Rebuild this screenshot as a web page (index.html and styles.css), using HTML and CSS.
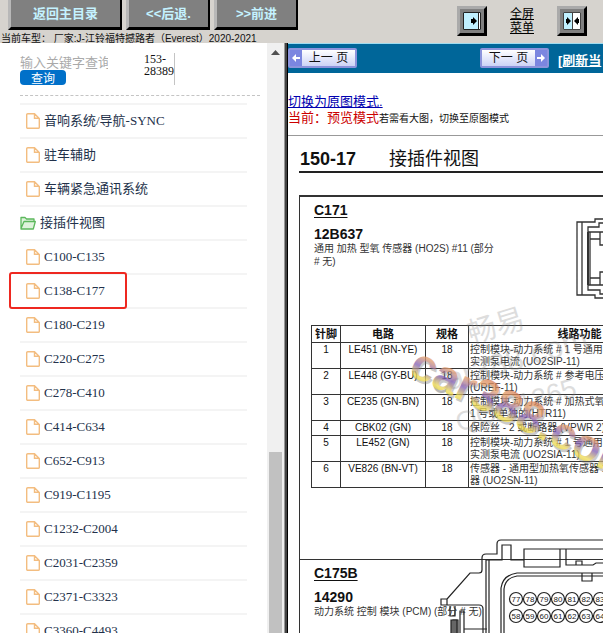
FILE: index.html
```html
<!DOCTYPE html>
<html lang="zh-CN">
<head>
<meta charset="utf-8">
<title>接插件视图</title>
<link rel="stylesheet" href="styles.css">
</head>
<body>
<svg class="defs" aria-hidden="true">
  <symbol id="doc" viewBox="0 0 14 16"><path d="M2 .7h6.5L13.3 5.500v9a1 1 0 0 1-1 .8H1.700a1 1 0 0 1-1-1V1.700a1 1 0 0 1 1-1zM8.500.7v4.500h4.800" fill="none" stroke="#f3bd80" stroke-width="1.400"/></symbol>
</svg>
<header class="top">
  <nav class="top-nav">
    <button class="big wide">返回主目录</button>
    <button class="big">&lt;&lt;后退.</button>
    <button class="big">&gt;&gt;前进</button>
  </nav>
  <div class="tools">
    <button class="tool" aria-label="展开"><svg width="18" height="18" viewBox="0 0 18 18"><path d="M0 0h18v18H0z" fill="#c0f0ff"/><path d="M15 1h2v16h-2z" fill="#fff"/><path d="M.5 17.500V.5h17v17zM15.500 1v16" fill="none" stroke="#222"/><path d="M8 7h2V5l4 4-4 4v-2H8z"/></svg></button>
    <a class="full" href="#">全屏<br>菜单</a>
    <button class="tool" aria-label="收起"><svg width="18" height="18" viewBox="0 0 18 18"><path d="M0 0h18v18H0z" fill="#fff"/><path d="M0 0h9v18H0z" fill="#c0f0ff"/><path d="M.5 17.500V.5h17v17zM9.500 0v18" fill="none" stroke="#444"/><path d="M3 7h1V5l4 4-4 4v-2H3zM16 7h-1V5l-4 4 4 4v-2h1z"/></svg></button>
  </div>
  <p class="car">当前车型： 厂家:J-江铃福特撼路者（Everest）2020-2021</p>
</header>
<div class="main">
  <aside class="side">
    <form class="search">
      <div class="field">
        <input class="query" type="text" placeholder="输入关键字查询" aria-label="输入关键字查询">
        <button class="go" type="button">查询</button>
      </div>
      <div class="num">153-28389</div>
    </form>
    <ul class="tree">
      <li><a href="#"><svg><use href="#doc"/></svg>音响系统/导航-SYNC</a></li>
      <li><a href="#"><svg><use href="#doc"/></svg>驻车辅助</a></li>
      <li><a href="#"><svg><use href="#doc"/></svg>车辆紧急通讯系统</a></li>
      <li class="folder"><a href="#"><svg viewBox="0 0 16 14"><path d="M1 12.500V1.500h4l1.500 1.500H14v2.500M1 12.500l3-7h11.300l-2 7.500H1z" fill="#dff3dc" stroke="#5cb85c" stroke-width="1.300" stroke-linejoin="round"/></svg>接插件视图</a></li>
      <li><a href="#"><svg><use href="#doc"/></svg>C100-C135</a></li>
      <li class="marked"><a href="#"><svg><use href="#doc"/></svg>C138-C177</a></li>
      <li><a href="#"><svg><use href="#doc"/></svg>C180-C219</a></li>
      <li><a href="#"><svg><use href="#doc"/></svg>C220-C275</a></li>
      <li><a href="#"><svg><use href="#doc"/></svg>C278-C410</a></li>
      <li><a href="#"><svg><use href="#doc"/></svg>C414-C634</a></li>
      <li><a href="#"><svg><use href="#doc"/></svg>C652-C913</a></li>
      <li><a href="#"><svg><use href="#doc"/></svg>C919-C1195</a></li>
      <li><a href="#"><svg><use href="#doc"/></svg>C1232-C2004</a></li>
      <li><a href="#"><svg><use href="#doc"/></svg>C2031-C2359</a></li>
      <li><a href="#"><svg><use href="#doc"/></svg>C2371-C3323</a></li>
      <li><a href="#"><svg><use href="#doc"/></svg>C3360-C4493</a></li>
    </ul>
  </aside>
  <div class="scroll"><svg width="9" height="5" viewBox="0 0 9 5"><path d="M4.500 0L9 5H0z" fill="#505050"/></svg><div class="thumb"></div></div>
  <div class="split"></div>
  <main class="view">
    <nav class="pager">
      <a class="page" href="#"><svg viewBox="0 0 12 16"><path d="M0 0h12v16H0z" fill="#7b86e0"/><path d="M2 8l4-4v3h4v2H6v3z" fill="#fff"/></svg><span>上一 页</span></a>
      <a class="page" href="#"><span>下一 页</span><svg viewBox="0 0 12 16"><path d="M0 0h12v16H0z" fill="#7b86e0"/><path d="M10 8L6 4v3H2v2h4v3z" fill="#fff"/></svg></a>
      <a class="refresh" href="#">[刷新当</a>
    </nav>
    <div class="mode">
      <a href="#">切换为原图模式.</a>
      <p><span class="red">当前：预览模式</span>若需看大图，切换至原图模式</p>
    </div>
    <article class="sheet">
      <h1><b>150-17</b>接插件视图</h1>
      <div class="frame">
        <section class="part first">
          <h2>C171</h2>
          <h3>12B637</h3>
          <p>通用 加热 型氧 传感器 (HO2S) #11 (部分<br># 无)</p>
          <svg class="plug" width="120" height="82" viewBox="0 0 120 82" fill="none" stroke="#333" stroke-width="1.300"><path d="M120 1H19v3H1v73h18v3h101M6 4v73M120 5H23v4H12v63h12v4h96M14 14v53M12 14h108M12 67h108M14 21h10v-7M14 60h10v7M24 21v6h96M24 60v-6h96"/><path d="M12 14v53" stroke-width="2"/></svg>
          <table>
            <thead><tr><th class="c1">针脚</th><th class="c2">电路</th><th class="c3">规格</th><th>线路功能</th></tr></thead>
            <tbody>
              <tr><td>1</td><td>LE451 (BN-YE)</td><td>18</td><td>控制模块-动力系统 # 1 号通用<br>实测泵电流 (UO2SIP-11)</td></tr>
              <tr><td>2</td><td>LE448 (GY-BU)</td><td>18</td><td>控制模块-动力系统 # 参考电压<br>(UREF-11)</td></tr>
              <tr><td>3</td><td>CE235 (GN-BN)</td><td>18</td><td>控制模块-动力系统 # 加热式氧<br>1 号或单独的(HTR11)</td></tr>
              <tr><td>4</td><td>CBK02 (GN)</td><td>18</td><td>保险丝 - 2 或断路器 (VPWR 2)</td></tr>
              <tr><td>5</td><td>LE452 (GN)</td><td>18</td><td>控制模块-动力系统 # 1 号通用<br>实测泵电流 (UO2SIA-11)</td></tr>
              <tr><td>6</td><td>VE826 (BN-VT)</td><td>18</td><td>传感器 - 通用型加热氧传感器 1<br>器 (UO2SN-11)</td></tr>
            </tbody>
          </table>
          <svg class="mark" width="220" height="200" viewBox="0 0 220 200">
            <defs><linearGradient id="g" x1="0" y1="0" x2="0" y2="1"><stop offset="0" stop-color="#c85a3c"/><stop offset=".35" stop-color="#e5a06a"/><stop offset=".55" stop-color="#7d5ab4"/><stop offset=".75" stop-color="#f0dc50"/><stop offset="1" stop-color="#b9a02d"/></linearGradient></defs>
            <g class="ghost"><text x="66" y="47" transform="rotate(-17 66 47)" font-size="29">畅易</text><text x="30" y="98" transform="rotate(-17 30 98)" font-size="31">car388.com</text><text x="54" y="135" transform="rotate(-17 54 135)" font-size="27">QQ 21365</text></g>
            <g class="brand" transform="rotate(26 2 77)"><text x="4" y="79" fill="#777" opacity=".5">car388.com</text><text x="2" y="77" fill="url(#g)">car388.com</text></g>
          </svg>
        </section>
        <section class="part second">
          <h2>C175B</h2>
          <h3>14290</h3>
          <p>动力系统 控制 模块 (PCM) (部分 # 无)</p>
          <svg class="pcm" width="164" height="94" viewBox="0 0 164 94" fill="none" stroke="#222" stroke-width="1.200">
            <path d="M164 1H62q-4 0-4 4v10H47q-4 0-4 4v12q0 3-3 3h-9L8 60v6h32q4 0 4 4v24M2 60h6v6H2zM11 67v10h5V67M50 94V21h13V6h9v15h13M47 94V21h3M85 10h36v18H85zM121 10h43M127 10v16h27l3-2h7M137 26v-4h6v4M62 94V49q2-13 16-15h86M65 94V50q1-11 13-13h86M143 34v8h10v-8M14 94V81h5v13M21 94V72h4v22M25 90h23"/>
            <path d="M12 94V81h6v13" fill="#666"/>
            <g class="pins"><circle cx="77" cy="60" r="6.500"/><circle cx="91" cy="60" r="6.500"/><circle cx="105" cy="60" r="6.500"/><circle cx="119" cy="60" r="6.500"/><circle cx="133" cy="60" r="6.500"/><circle cx="147" cy="60" r="6.500"/><circle cx="161" cy="60" r="6.500"/><circle cx="77" cy="77" r="6.500"/><circle cx="91" cy="77" r="6.500"/><circle cx="105" cy="77" r="6.500"/><circle cx="119" cy="77" r="6.500"/><circle cx="133" cy="77" r="6.500"/><circle cx="147" cy="77" r="6.500"/><circle cx="161" cy="77" r="6.500"/>
            <text x="77" y="63">77</text><text x="91" y="63">78</text><text x="105" y="63">79</text><text x="119" y="63">80</text><text x="133" y="63">81</text><text x="147" y="63">82</text><text x="161" y="63">83</text><text x="77" y="80">58</text><text x="91" y="80">59</text><text x="105" y="80">60</text><text x="119" y="80">61</text><text x="133" y="80">62</text><text x="147" y="80">63</text><text x="161" y="80">64</text></g>
          </svg>
        </section>
      </div>
    </article>
  </main>
</div>
</body>
</html>
```
FILE: styles.css
```css
*, *::after { box-sizing: border-box; }
body {
  margin: 0;
  height: 100vh;
  overflow: hidden;
  display: grid;
  grid-template-rows: 43px minmax(0, 1fr);
  background: #fff;
  font-family: "Liberation Sans", "Noto Sans CJK SC", sans-serif;
  color: #111;
}
h1, h2, h3, p, ul { margin: 0; padding: 0; }
.defs { position: absolute; width: 0; height: 0; }

.top {
  display: grid;
  grid-template-columns: auto 1fr;
  grid-template-rows: 31px 12px;
  background: #d6d3ce;
  overflow: hidden;
}
.top-nav { display: flex; gap: 4px; padding-left: 8px; height: 30px; }
.big {
  width: 84px;
  height: 30px;
  padding: 0 0 2px;
  border: solid #000;
  border-width: 0 2px 3px 3px;
  border-left-color: #b8b8b8;
  background: #808080;
  color: #c4f2ff;
  font: bold 13px "Liberation Sans", "Noto Sans CJK SC", sans-serif;
  white-space: nowrap;
}
.wide { width: 114px; }
.tools { display: flex; justify-content: flex-end; align-items: flex-start; gap: 19px; padding: 6px 16px 0 0; }
.tool {
  width: 30px;
  height: 30px;
  padding: 3px;
  border: 3px solid;
  border-color: #aaa #000 #000 #aaa;
  background: #808080;
}
.tool svg { display: block; }
.full { width: 32px; text-align: center; font-size: 12px; line-height: 14px; color: #000; padding-top: 1px; }
.car { grid-column: 1 / 3; padding-left: 1px; font-size: 10px; line-height: 16px; white-space: nowrap; }

.main { display: grid; grid-template-columns: 267px 17px 4px minmax(0, 1fr); min-height: 0; }
.side { padding: 10px 7px 0 20px; overflow: hidden; }
.search { display: flex; height: 43px; border-bottom: 1px dashed #c4c4c4; }
.field { width: 124px; display: flex; flex-direction: column; align-items: flex-start; }
.query {
  width: 88px;
  height: 17px;
  padding: 0;
  border: 0;
  outline: 0;
  background: none;
  font: 13px "Noto Sans CJK SC", sans-serif;
}
.query::placeholder { color: #aaa; }
.go {
  width: 46px;
  height: 15px;
  padding: 0;
  border: 0;
  border-radius: 4px;
  background: #0070c9;
  color: #fff;
  font: 12px/15px "Noto Sans CJK SC", sans-serif;
}
.num {
  width: 31px;
  height: 32px;
  border-right: 1px solid #c4c4c4;
  font: 12px/12px "Liberation Serif", serif;
  overflow-wrap: break-word;
}
.tree { list-style: none; margin: 7px 13px 0 0; border-top: 2px solid #f4f4f4; }
.tree li { position: relative; height: 34px; border-bottom: 2px solid #f4f4f4; padding-left: 6px; }
.tree a {
  display: flex;
  align-items: center;
  gap: 4px;
  height: 32px;
  color: #22314a;
  font: 13px/16px "Liberation Serif", "Noto Sans CJK SC", serif;
  text-decoration: none;
  white-space: nowrap;
}
.tree svg { width: 14px; height: 16px; }
.tree .folder { padding-left: 0; }
.tree .folder svg { width: 16px; height: 14px; }
.marked::after {
  content: "";
  position: absolute;
  left: -11px;
  top: -3px;
  width: 118px;
  height: 37px;
  border: 2px solid #ee2820;
  border-radius: 3px;
}
.scroll { display: flex; flex-direction: column; align-items: center; justify-content: space-between; padding-top: 7px; background: #f0f0f0; }
.thumb { width: 13px; height: 31%; background: #c1c1c1; }
.split { background: #444; border-left: 1px solid #999; border-right: 1px solid #000; }

.view { overflow: hidden; }
.pager {
  display: flex;
  height: 30px;
  align-items: flex-start;
  padding-top: 4px;
  background: #069;
  border-top: 1px solid #9edcf0;
}
.page {
  display: flex;
  align-items: stretch;
  width: 69px;
  height: 20px;
  border: 2px solid #8c93dc;
  border-radius: 2px;
  background: linear-gradient(#fff, #ccd3f6);
  color: #111;
  font-size: 12px;
  line-height: 16px;
  text-decoration: none;
}
.page span { flex: 1; text-align: center; white-space: nowrap; }
.page svg { width: 12px; height: 16px; }
.page + .page { margin-left: 123px; }
.refresh { margin-left: 9px; color: #fff; font-weight: bold; font-size: 13px; line-height: 26px; white-space: nowrap; }
.mode { padding: 21px 0 0; height: 63px; border-bottom: 1px solid #999; font-size: 13px; line-height: 16px; white-space: nowrap; }
.mode a { display: block; color: #0000b0; }
.mode p { font-size: 10px; line-height: 16px; }
.red { color: #c00; font-size: 13px; }

.sheet { padding-left: 11px; }
.sheet h1 {
  display: flex;
  gap: 33px;
  height: 37px;
  padding: 12px 0 0 1px;
  border-bottom: 2px solid #222;
  font-size: 18px;
  font-weight: normal;
  line-height: 22px;
  white-space: nowrap;
}
.frame { margin-top: 22px; border: solid #333; border-width: 2px 0 0 1px; }
.part { position: relative; padding-left: 14px; }
.first { height: 363px; padding-top: 5px; border-bottom: 1px solid #333; }
.second { height: 80px; padding-top: 5px; }
.part h2 { font-size: 14px; line-height: 16px; text-decoration: underline; text-underline-offset: 2px; }
.part h3 { margin-top: 8px; font-size: 14px; line-height: 16px; }
.part p { font-size: 10px; line-height: 13px; white-space: nowrap; color: #333; }
.plug { position: absolute; left: 276px; top: 21px; }
table {
  width: 380px;
  margin: 57px 0 0 -3px;
  border-collapse: collapse;
  table-layout: fixed;
  font-size: 10px;
  line-height: 12px;
}
th, td { border: 1px solid #333; padding: 1px 1px 0; vertical-align: top; text-align: center; white-space: nowrap; }
th { font-size: 11px; line-height: 15px; }
td { height: 15px; }
td:last-child { text-align: left; color: #333; }
.c1 { width: 29px; }
.c2 { width: 85px; }
.c3 { width: 43px; }
.mark { position: absolute; left: 105px; top: 100px; }
.ghost { fill: #888; opacity: .28; }
.brand { font-size: 45px; font-weight: bold; opacity: .75; }
.pcm { position: absolute; left: 139px; top: -21px; }
.pins text { fill: #222; stroke: none; font-size: 8px; text-anchor: middle; }
```
